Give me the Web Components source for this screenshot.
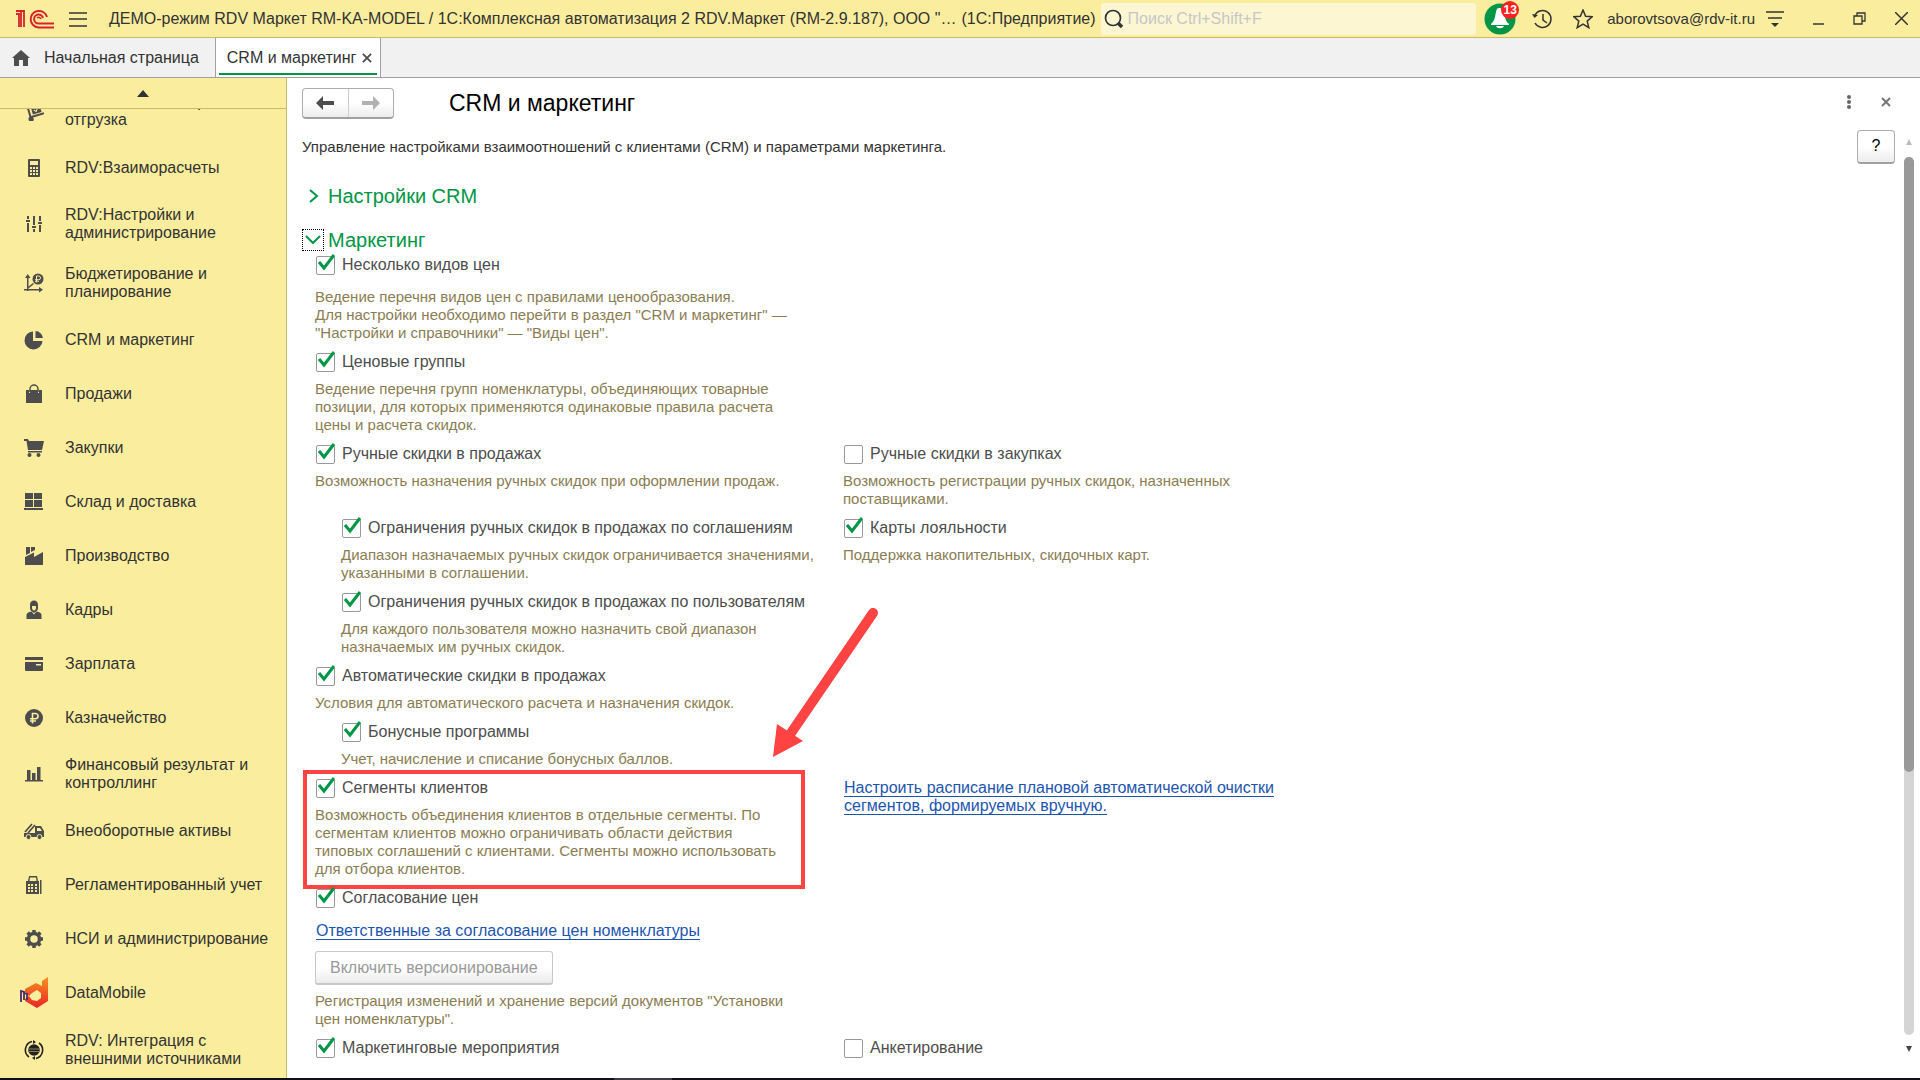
<!DOCTYPE html>
<html lang="ru">
<head>
<meta charset="utf-8">
<title>CRM и маркетинг</title>
<style>
  html, body {
    margin: 0;
    height: 100%;
  }
  body {
    font: 16px/18px "Liberation Sans", Arial, sans-serif;
    color: #333;
    background: #fff;
    overflow: hidden;
  }
</style>
</head>
<body>
<app-shell>
  <app-topbar slot="top"></app-topbar>
  <app-tabs slot="top"></app-tabs>
  <app-sidebar slot="side">
    <side-item icon="trolley">RDV:Заказ на сбор и отгрузка</side-item>
    <side-item icon="calc">RDV:Взаиморасчеты</side-item>
    <side-item icon="sliders">RDV:Настройки и администрирование</side-item>
    <side-item icon="budget">Бюджетирование и планирование</side-item>
    <side-item icon="pie">CRM и маркетинг</side-item>
    <side-item icon="bag">Продажи</side-item>
    <side-item icon="cart">Закупки</side-item>
    <side-item icon="boxes">Склад и доставка</side-item>
    <side-item icon="factory">Производство</side-item>
    <side-item icon="person">Кадры</side-item>
    <side-item icon="card">Зарплата</side-item>
    <side-item icon="ruble">Казначейство</side-item>
    <side-item icon="bars">Финансовый результат и контроллинг</side-item>
    <side-item icon="truck">Внеоборотные активы</side-item>
    <side-item icon="register">Регламентированный учет</side-item>
    <side-item icon="gear">НСИ и администрирование</side-item>
    <side-item icon="datamobile">DataMobile</side-item>
    <side-item icon="globe">RDV: Интеграция с внешними источниками</side-item>
  </app-sidebar>
  <settings-page heading="CRM и маркетинг">
    <span slot="intro">Управление настройками взаимоотношений с клиентами (CRM) и параметрами маркетинга.</span>
    <settings-group heading="Настройки CRM"></settings-group>
    <settings-group heading="Маркетинг" open>
      <option-row>
        <option-item loose checked label="Несколько видов цен">Ведение перечня видов цен с правилами ценообразования.<br>Для настройки необходимо перейти в раздел "CRM и маркетинг" —<br>"Настройки и справочники" — "Виды цен".</option-item>
      </option-row>
      <option-row>
        <option-item checked label="Ценовые группы">Ведение перечня групп номенклатуры, объединяющих товарные<br>позиции, для которых применяются одинаковые правила расчета<br>цены и расчета скидок.</option-item>
      </option-row>
      <option-row>
        <option-item checked label="Ручные скидки в продажах">Возможность назначения ручных скидок при оформлении продаж.</option-item>
        <option-item slot="right" label="Ручные скидки в закупках">Возможность регистрации ручных скидок, назначенных<br>поставщиками.</option-item>
      </option-row>
      <option-row>
        <option-item nested checked label="Ограничения ручных скидок в продажах по соглашениям">Диапазон назначаемых ручных скидок ограничивается значениями,<br>указанными в соглашении.</option-item>
        <option-item slot="right" checked label="Карты лояльности">Поддержка накопительных, скидочных карт.</option-item>
      </option-row>
      <option-row>
        <option-item nested checked label="Ограничения ручных скидок в продажах по пользователям">Для каждого пользователя можно назначить свой диапазон<br>назначаемых им ручных скидок.</option-item>
      </option-row>
      <option-row>
        <option-item checked label="Автоматические скидки в продажах">Условия для автоматического расчета и назначения скидок.</option-item>
      </option-row>
      <option-row>
        <option-item nested checked label="Бонусные программы">Учет, начисление и списание бонусных баллов.</option-item>
      </option-row>
      <option-row>
        <option-item marked checked label="Сегменты клиентов">Возможность объединения клиентов в отдельные сегменты. По<br>сегментам клиентов можно ограничивать области действия<br>типовых соглашений с клиентами. Сегменты можно использовать<br>для отбора клиентов.</option-item>
        <text-link slot="right">Настроить расписание плановой автоматической очистки сегментов, формируемых вручную.</text-link>
      </option-row>
      <option-row>
        <version-block></version-block>
      </option-row>
      <option-row>
        <option-item checked label="Маркетинговые мероприятия"></option-item>
        <option-item slot="right" label="Анкетирование"></option-item>
      </option-row>
    </settings-group>
  </settings-page>
</app-shell>

<script>
const ICONS = {
  trolley: '<g transform="rotate(-16 10 10)"><path d="M4 1h2v14H4zM5 14h14v2H5z"/><circle cx="5" cy="17" r="2.6"/><path d="M8 4h9v9H8z"/><path d="M10 9l2 2 3-4" stroke="#fbed9e" fill="none"/></g>',
  calc: '<path fill-rule="evenodd" d="M5 1h10a1 1 0 0 1 1 1v16a1 1 0 0 1-1 1H5a1 1 0 0 1-1-1V2a1 1 0 0 1 1-1zM6 3v4h8V3zM6 9v2h2V9zm3 0v2h2V9zm3 0v2h2V9zM6 12v2h2v-2zm3 0v2h2v-2zm3 0v2h2v-2zM6 15v2h2v-2zm3 0v2h2v-2zm3 0v2h2v-2z"/>',
  sliders: '<path d="M3 2h2v3H3zM2 6h4v2H2zM3 9h2v9H3zM9 2h2v9H9zM8 12h4v2H8zM9 15h2v3H9zM15 2h2v5h-2zM14 8h4v2h-4zM15 11h2v7h-2z"/>',
  budget: '<path d="M3 4h1.500v14H3zM1 5l2.700-4L6.500 5zM0 16h16v1.500H0zM15 14l4 2.700-4 2.800zM4 14l5-4 1 1-5 4z"/><circle cx="14" cy="6" r="5.500"/><path d="M12.500 9.500V3h2.200a1.800 1.800 0 0 1 0 3.700H11M11 8.200h4" stroke="#fbed9e" fill="none"/>',
  pie: '<path d="M9 1.500V11h9.500A9 9 0 1 1 9 1.500z"/><path d="M11.500 1a8 8 0 0 1 7.500 7h-7.500z"/>',
  bag: '<path d="M2 6h3v3h1V6h8v3h1V6h3v13H2z"/><path d="M6 8V5a4 4 0 0 1 8 0v3" fill="none" stroke="#4d4d4d" stroke-width="1.500"/>',
  cart: '<path d="M0 1h4l1 2h15l-2 9H4L2.500 3H0zM4 13h14v1.500H4z"/><circle cx="5.500" cy="17" r="2"/><circle cx="14.500" cy="17" r="2"/>',
  boxes: '<path d="M1 1h8v6H1zM10 1h8v6h-8zM1 8h8v7H1zM10 8h8v7h-8zM0 16h19v2H0z"/>',
  factory: '<path d="M1 19V11l9-4.500V11l9-5v13zM2 1h4v6L2 9zM7 1h4v3L7 6z"/>',
  person: '<path d="M6 5c0-3 1.500-4.500 4-4.500S14 2 14 5v3c0 2-1 3-2 3.500L10 13l-2-1.500C7 11 6 10 6 8z"/><path d="M2.500 19v-4c0-2 2-3 5-3.500l2.500 3 2.500-3c3 .500 5 1.500 5 3.500v4z"/><path d="M8 6h4v2c0 1.500-1 2.500-2 2.500S8 9.500 8 8z" fill="#fbed9e"/>',
  card: '<path fill-rule="evenodd" d="M1 3h18v3H1zM1 8h18v8a1 1 0 0 1-1 1H2a1 1 0 0 1-1-1zM12 10v1.500h5V10z"/>',
  ruble: '<circle cx="10" cy="10" r="9"/><path d="M8.500 15.500V5.500h3a2.500 2.500 0 0 1 0 5.200H6M6 13h6" stroke="#fbed9e" stroke-width="1.600" fill="none"/>',
  bars: '<path d="M1 16h18v1.500H1zM3 6h3.500v10H3zM8 9h3.500v7H8zM13 3h3.500v13H13z"/>',
  truck: '<path d="M1 11l7-8M4 12l7-8" stroke="#4d4d4d" stroke-width="1.800"/><path fill-rule="evenodd" d="M0 12h11V5h6l3 5v6H0zM13 7v3h5l-2-3z"/><circle cx="4.500" cy="16" r="2.500" stroke="#fbed9e"/><circle cx="15.500" cy="16" r="2.500" stroke="#fbed9e"/>',
  register: '<path fill-rule="evenodd" d="M5 1h8l1 5h1v13H2V6h2zM6 2.500L5.500 6h7L12 2.500zM4 9v2h2V9zm3 0v2h2V9zm4 0v2h2V9zM4 12v2h2v-2zm3 0v2h2v-2zm4 0v2h2v-2zM4 15v2h2v-2zm3 0v2h2v-2zm4 0v2h2v-2zM16 5h1.500v14H16z"/>',
  gear: '<circle cx="10" cy="10" r="5.500" fill="none" stroke="#4d4d4d" stroke-width="3.500"/><g stroke="#4d4d4d" stroke-width="3.500"><path d="M10 1v3M10 16v3M1 10h3M16 10h3M3.600 3.600l2 2M14.400 14.400l2 2M3.600 16.400l2-2M14.400 5.600l2-2"/></g>',
  globe: '<circle cx="10" cy="10" r="5.800" fill="#222"/><path d="M4 9h12M4 11.500h12" stroke="#8a8357" fill="none"/><path d="M8 1.500A8.700 8.700 0 0 0 5 17M12 18.500A8.700 8.700 0 0 0 15 3" fill="none" stroke="#222" stroke-width="1.600"/><path d="M9 0l3 2-3 2zM11 16v4l-3-2z" fill="#222"/>'
};

const ICON_DM = `
  <svg width="28" height="32" viewBox="0 0 28 32">
    <defs><linearGradient id="dm" x1="0" y1="0" x2="0" y2="1">
      <stop offset="0" stop-color="#f7931e"/><stop offset="1" stop-color="#ec2227"/>
    </linearGradient></defs>
    <path fill="url(#dm)" fill-rule="evenodd" d="M22 4l6-4v24l-11 7-12-7v-2l4-3-4-4v-3l11-6 6 3zM12 16l-3 3 3 4 5 1 4-3v-5l-4-3z"/>
    <path fill="none" stroke="#4a2a6b" stroke-width="1.800" d="M1 25V14l3 1v8M4 16l3 1v6"/>
  </svg>`;

// Base class: copies the static template into an open shadow root
class BaseElement extends HTMLElement {
  constructor() {
    super();
    const template = document.createElement("template");
    template.innerHTML = `<style>* { box-sizing: border-box; }${this.constructor.styles}</style>`;
    this.attachShadow({ mode: "open" });
    this.shadowRoot.appendChild(template.content.cloneNode(true));
  }

  connectedCallback() {
    if (this.rendered) return;
    this.rendered = true;
    const template = document.createElement("template");
    template.innerHTML = this.markup();
    this.shadowRoot.appendChild(template.content.cloneNode(true));
  }
}

class AppShell extends BaseElement {
  static get styles() {
    return `
      :host { display: flex; flex-direction: column; height: 100vh; }
      .body { display: flex; flex: 1; min-height: 0; }
      footer { height: 2px; background: linear-gradient(90deg, #101018 32%, #3c3c42 32%, #3c3c42 35%, #101018 35%); }
    `;
  }
  markup() {
    return `<slot name="top"></slot><div class="body"><slot name="side"></slot><slot></slot></div><footer></footer>`;
  }
}

class AppTopbar extends BaseElement {
  static get styles() {
    return `
      :host { display: block; background: #fbed9e; border-bottom: 1px solid #cbbb67; }
      header { display: flex; align-items: center; height: 37px; padding: 0 12px 0 16px; }
      button { display: flex; padding: 0; border: 0; background: none; color: #333; font: inherit; }
      svg { display: block; fill: none; stroke: #333; stroke-width: 2; }
      .menu { margin-left: 15px; }
      .title { margin-left: 22px; white-space: nowrap; }
      .app { margin-left: 5px; white-space: nowrap; }
      .search { display: flex; flex: 1; align-items: center; gap: 4px; height: 32px; margin-left: 5px; padding-left: 3px; background: #fdf6d3; border-radius: 3px; }
      input { flex: 1; min-width: 0; padding: 0; border: 0; outline: 0; background: none; font: inherit; }
      input::placeholder { color: #c6c6c6; opacity: 1; }
      .bell { position: relative; margin-left: 8px; }
      .badge { position: absolute; top: -2px; right: -3px; width: 18px; height: 18px; border-radius: 9px; background: #ff2121; color: #fff; font: bold 12px/18px "Liberation Sans", Arial, sans-serif; text-align: center; }
      .tools { display: flex; align-items: center; gap: 21px; margin: 0 14px 0 16px; }
      .user { font-size: 15px; }
      .window { display: flex; align-items: center; gap: 29px; margin-left: 11px; }
    `;
  }
  markup() {
    return `
      <header>
        <svg width="38" height="20" viewBox="0 0 38 20" style="stroke:#d8232a" aria-label="1C">
          <path d="M0 5h3v13M0 2h8v16M5 3v15" stroke-width="1.800"/>
          <path d="M31 8a8.300 8.300 0 1 0-8.500 10.500H38M27 9a4.500 4.500 0 1 0-4.500 5.500H38"/>
          <path d="M25 10a2.500 2.500 0 0 0-4-1" stroke-width="1.500"/>
        </svg>
        <button class="menu" aria-label="Меню">
          <svg width="18" height="16" viewBox="0 0 18 16"><path d="M0 2h18M0 8h18M0 15h18" stroke-width="1.500"/></svg>
        </button>
        <span class="title">ДЕМО-режим RDV Маркет RM-KA-MODEL / 1С:Комплексная автоматизация 2 RDV.Маркет (RM-2.9.187), ООО "…</span>
        <span class="app">(1С:Предприятие)</span>
        <label class="search">
          <svg width="20" height="20" viewBox="0 0 20 20"><circle cx="9" cy="9" r="7.500" stroke-width="1.700"/><path d="M14 14l4 4" stroke-width="3.500"/></svg>
          <input type="text" placeholder="Поиск Ctrl+Shift+F" aria-label="Поиск">
        </label>
        <button class="bell" aria-label="Уведомления">
          <svg width="32" height="32" viewBox="0 0 32 32" style="stroke:none">
            <circle cx="16" cy="16" r="15.500" fill="#009646"/>
            <path d="M15 5c5 0 5 4 6 9 1 4 2 5 4 7v1H7v-1c2-2 3-3 4-7 1-4 1-9 4-9zM12 23h8c-1 3-7 3-8 0z" fill="#fff"/>
          </svg>
          <span class="badge">13</span>
        </button>
        <div class="tools">
          <button aria-label="История"><svg width="20" height="20" viewBox="0 0 20 20"><path d="M3 6a8.500 8.500 0 1 1 0 8M11 5v6l4 3" stroke-width="1.500"/><path d="M0 5l2.500 4L6 6z" fill="#333" stroke="none"/></svg></button>
          <button aria-label="Избранное"><svg width="20" height="20" viewBox="0 0 20 20"><path d="M10 1l2.600 6.200 6.600.500-5 4.400 1.600 6.600L10 15.200l-5.800 3.500 1.600-6.600-5-4.400 6.600-.500z" stroke-width="1.500"/></svg></button>
        </div>
        <span class="user">aborovtsova@rdv-it.ru</span>
        <div class="window">
          <button aria-label="Настройки"><svg width="18" height="18" viewBox="0 0 18 18"><path d="M0 2h18M2 8h14" stroke-width="1.500"/><path d="M5 13h8l-4 4z" fill="#333" stroke="none"/></svg></button>
          <button aria-label="Свернуть"><svg width="11" height="12" viewBox="0 0 11 12"><path d="M0 11h11" stroke-width="1.500"/></svg></button>
          <button aria-label="Развернуть"><svg width="13" height="13" viewBox="0 0 13 13"><path d="M1 4h8v8H1zM4 4V1h8v8H9" stroke-width="1.300"/></svg></button>
          <button aria-label="Закрыть"><svg width="13" height="13" viewBox="0 0 13 13"><path d="M0 0l13 13M13 0L0 13" stroke-width="1.500"/></svg></button>
        </div>
      </header>
    `;
  }
}

class AppTabs extends BaseElement {
  static get styles() {
    return `
      :host { display: block; background: #f1f1f1; border-bottom: 1px solid #a0a0a0; }
      nav { display: flex; height: 39px; }
      a { display: flex; align-items: center; gap: 14px; padding: 0 16px 0 12px; color: #333; text-decoration: none; }
      .active { flex-direction: column; padding: 0 3px; gap: 0; background: #fff; border: solid #a0a0a0; border-width: 0 1px; }
      .active span { display: flex; flex: 1; align-items: center; gap: 6px; padding: 4px 5px 0 8px; }
      .active::after { content: ""; width: 100%; height: 2px; margin-bottom: 2px; background: #009646; }
      button { display: flex; padding: 0; border: 0; background: none; }
    `;
  }
  markup() {
    return `
      <nav>
        <a href="#home">
          <svg width="18" height="16" viewBox="0 0 18 16" fill="#4d4d4d"><path d="M9 0l9 8h-2v8h-5v-6H7v6H2V8H0z"/></svg>
          Начальная страница
        </a>
        <a class="active" href="#crm">
          <span>CRM и маркетинг
            <button aria-label="Закрыть вкладку"><svg width="10" height="10" viewBox="0 0 11 11" stroke="#4d4d4d" stroke-width="2"><path d="M1 1l9 9M10 1l-9 9"/></svg></button>
          </span>
        </a>
      </nav>
    `;
  }
}

class AppSidebar extends BaseElement {
  static get styles() {
    return `
      :host { display: flex; flex-direction: column; flex: 0 0 286px; background: #fbed9e; border-right: 1px solid #cbbb67; }
      button { display: flex; flex: none; align-items: center; justify-content: center; height: 31px; padding: 0; background: none; border: 0; border-bottom: 1px solid #cbbb67; }
      /* the list is scrolled to its end */
      nav { display: flex; flex: 1; flex-direction: column; justify-content: flex-end; min-height: 0; overflow: hidden; }
    `;
  }
  markup() {
    return `
      <button aria-label="Прокрутить вверх"><svg width="12" height="7" viewBox="0 0 12 7"><path d="M6 0l6 7H0z" fill="#333"/></svg></button>
      <nav><slot></slot></nav>
    `;
  }
}

class SideItem extends BaseElement {
  static get styles() {
    return `
      :host { display: block; flex: none; }
      a { display: flex; align-items: center; min-height: 54px; padding: 13px 15px 10px 0; color: #333; text-decoration: none; }
      .icon { display: flex; flex: 0 0 65px; justify-content: center; }
      .icon svg { margin-right: -3px; fill: #4d4d4d; }
    `;
  }
  markup() {
    const name = this.getAttribute("icon");
    const svg = name === "datamobile"
      ? ICON_DM
      : `<svg width="20" height="20" viewBox="0 0 20 20">${ICONS[name]}</svg>`;
    return `<a href="#${name}"><span class="icon">${svg}</span><span><slot></slot></span></a>`;
  }
}

class SettingsPage extends BaseElement {
  static get styles() {
    return `
      :host { display: flex; flex: 1; flex-direction: column; min-width: 0; }
      .head { display: flex; align-items: center; padding: 10px 29px 0 15px; }
      .arrows { display: flex; width: 92px; height: 31px; border: 1px solid #adadad; border-bottom: 2px solid #a0a0a0; border-radius: 4px; background: linear-gradient(#fff 50%, #ececec); }
      button { display: flex; align-items: center; justify-content: center; padding: 0; border: 0; background: none; font: inherit; color: #000; }
      .arrows button { flex: 1; }
      .arrows button + button { border-left: 1px solid #ccc; }
      h1 { flex: 1; margin: 0 0 0 55px; padding-bottom: 2px; font-size: 23px; line-height: 28px; font-weight: normal; color: #000; }
      .head > button { margin-left: 30px; padding-bottom: 4px; }
      .intro { display: flex; justify-content: space-between; align-items: center; margin: 11px 25px 0 15px; height: 33px; font-size: 15px; }
      .help { width: 38px; height: 34px; border: 1px solid #adadad; border-bottom: 2px solid #a0a0a0; border-radius: 4px; background: linear-gradient(#fff 50%, #ececec); font-size: 16px; }
      .content { display: flex; flex: 1; min-height: 0; }
      main { flex: 1; min-width: 0; padding: 22px 15px 0; overflow: hidden; }
      .scroll { display: flex; flex: none; flex-direction: column; align-items: center; width: 22px; margin-top: -24px; padding: 0 0 26px; }
      .track { flex: 1; width: 10px; margin: 12px 0 11px; border-radius: 5px; background: #d5d5d5; }
      .thumb { height: 70%; border-radius: 5px; background: #999; }
    `;
  }
  markup() {
    return `
      <div class="head">
        <div class="arrows">
          <button aria-label="Назад"><svg width="18" height="14" viewBox="0 0 18 14"><path d="M0 7l7-7v5h11v4H7v5z" fill="#4d4d4d"/></svg></button>
          <button aria-label="Вперед"><svg width="18" height="14" viewBox="0 0 18 14"><path d="M18 7l-7-7v5H0v4h11v5z" fill="#b0b0b0"/></svg></button>
        </div>
        <h1>${this.getAttribute("heading")}</h1>
        <button aria-label="Еще"><svg width="4" height="14" viewBox="0 0 4 14" fill="#666"><circle cx="2" cy="2" r="2"/><circle cx="2" cy="7" r="2"/><circle cx="2" cy="12" r="2"/></svg></button>
        <button aria-label="Закрыть"><svg width="10" height="10" viewBox="0 0 10 10" stroke="#777" stroke-width="2"><path d="M1 1l8 8M9 1L1 9"/></svg></button>
      </div>
      <div class="intro"><slot name="intro"></slot><button class="help">?</button></div>
      <div class="content">
        <main><slot></slot></main>
        <div class="scroll" aria-hidden="true">
          <svg width="6" height="6" viewBox="0 0 6 6"><path d="M3 0l3 6H0z" fill="#bbb"/></svg>
          <div class="track"><div class="thumb"></div></div>
          <svg width="6" height="6" viewBox="0 0 6 6"><path d="M3 6l3-6H0z" fill="#444"/></svg>
        </div>
      </div>
    `;
  }
}

class SettingsGroup extends BaseElement {
  static get styles() {
    return `
      :host { display: block; margin-bottom: 22px; }
      h2 { display: flex; align-items: center; gap: 4px; margin: 0; font-size: 20px; line-height: 22px; font-weight: normal; color: #009646; }
      button { display: flex; align-items: center; justify-content: center; width: 22px; height: 22px; padding: 0; border: 1px dotted transparent; background: none; }
      :host([open]) button { border-color: #000; }
      .rows { display: grid; row-gap: 10px; padding: 4px 0 0 13px; }
    `;
  }
  markup() {
    const open = this.hasAttribute("open");
    const path = open ? "M1 4l7 7 7-7" : "M5 2l7 6-7 6";
    return `
      <h2>
        <button aria-expanded="${open}" aria-label="${this.getAttribute("heading")}">
          <svg width="16" height="16" viewBox="0 0 16 16" fill="none" stroke="#009646" stroke-width="2"><path d="${path}"/></svg>
        </button>
        ${this.getAttribute("heading")}
      </h2>
      ${open ? `<div class="rows"><slot></slot></div>` : ""}
    `;
  }
}

class OptionRow extends BaseElement {
  static get styles() {
    return `
      :host { display: grid; grid-template-columns: 528px minmax(0, 1fr); align-items: start; }
    `;
  }
  markup() {
    return `<slot></slot><slot name="right"></slot>`;
  }
}

class OptionItem extends BaseElement {
  static get styles() {
    return `
      :host { display: block; position: relative; color: #8a7d52; }
      :host([nested]) { margin-left: 26px; }
      .check { display: flex; align-items: center; height: 20px; color: #4d4d4d; }
      label { margin-left: 7px; }
      input { appearance: none; width: 19px; height: 19px; margin: 0 0 0 1px; border: 1px solid #999; border-radius: 2px; background: #fff; }
      .box { position: relative; display: flex; }
      .tick { position: absolute; left: 2px; top: -2px; pointer-events: none; }
      .hint { margin-top: 8px; font-size: 15px; }
      :host([loose]) .hint { margin-top: 13px; }
      .frame { position: absolute; inset: -8px 38px -11px -12px; border: 4px solid #ff4242; }
      .pointer { position: absolute; left: 456px; top: -173px; }
    `;
  }
  markup() {
    const checked = this.hasAttribute("checked");
    return `
      <div class="check">
        <span class="box">
          <input type="checkbox" id="flag" ${checked ? "checked" : ""}>
          ${checked ? `<svg class="tick" width="19" height="17" viewBox="0 0 19 17" fill="none" stroke="#009646" stroke-width="3"><path d="M2 8l5 6L17 1"/></svg>` : ""}
        </span>
        <label for="flag">${this.getAttribute("label")}</label>
      </div>
      ${this.textContent ? `<div class="hint"><slot></slot></div>` : ""}
      ${this.hasAttribute("marked") ? `
        <div class="frame"></div>
        <svg class="pointer" width="110" height="154" viewBox="0 0 110 154" fill="#ff4242">
          <path d="M102 8L18 131" stroke="#ff4242" stroke-width="10" stroke-linecap="round"/>
          <path d="M2 152L6 119 32 136z"/>
        </svg>` : ""}
    `;
  }
}

class TextLink extends BaseElement {
  static get styles() {
    return `
      :host { display: block; max-width: 490px; padding: 1px; }
      a { color: #1c55b0; text-underline-offset: 3px; text-decoration-thickness: 1px; text-decoration-skip-ink: none; }
    `;
  }
  markup() {
    return `<a href="#"><slot></slot></a>`;
  }
}

class VersionBlock extends BaseElement {
  static get styles() {
    return `
      :host { display: flex; flex-direction: column; align-items: flex-start; }
      text-link { margin: 13px 0 10px; }
      button { height: 34px; padding: 0 14px; border: 1px solid #c8c8c8; border-bottom-width: 2px; border-radius: 3px; background: linear-gradient(#fff 50%, #ebebeb); color: #999; font: inherit; }
      p { margin: 7px 0 0; color: #8a7d52; font-size: 15px; }
    `;
  }
  markup() {
    return `
      <option-item checked label="Согласование цен"></option-item>
      <text-link>Ответственные за согласование цен номенклатуры</text-link>
      <button disabled>Включить версионирование</button>
      <p>Регистрация изменений и хранение версий документов "Установки<br>цен номенклатуры".</p>
    `;
  }
}

customElements.define("app-shell", AppShell);
customElements.define("app-topbar", AppTopbar);
customElements.define("app-tabs", AppTabs);
customElements.define("app-sidebar", AppSidebar);
customElements.define("side-item", SideItem);
customElements.define("settings-page", SettingsPage);
customElements.define("settings-group", SettingsGroup);
customElements.define("option-row", OptionRow);
customElements.define("option-item", OptionItem);
customElements.define("text-link", TextLink);
customElements.define("version-block", VersionBlock);
</script>
</body>
</html>
